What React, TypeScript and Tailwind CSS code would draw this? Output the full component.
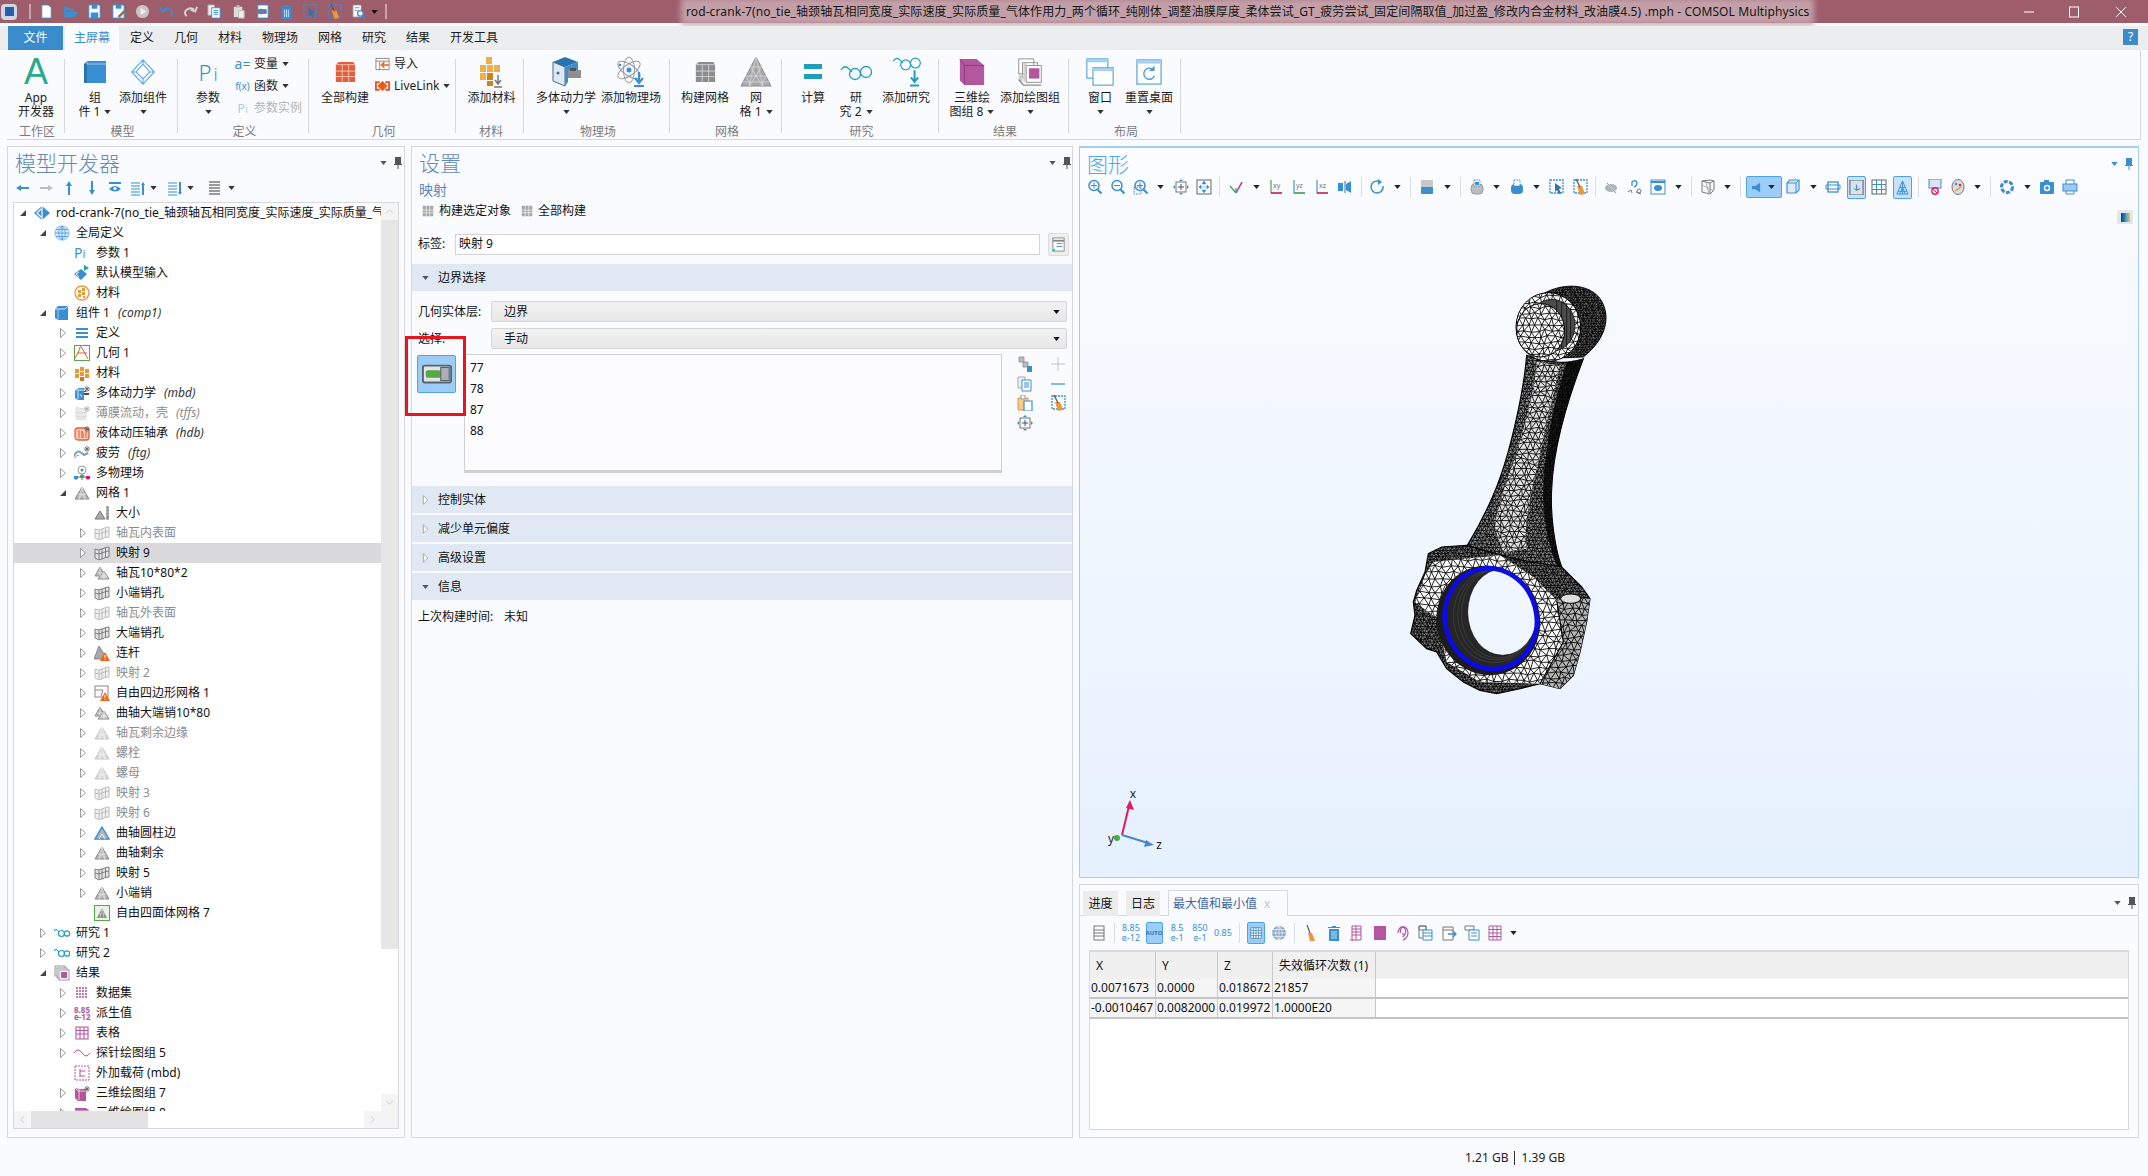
import React from "react"

const B = "#3a8fd3"
const LB = "#a3cff5"
const G = "#858585"
const M = "#b3559f"
const O = "#e8983a"
const R = "#e0603c"
const T = "#1f9dbb"

const warn = (
  <>
    <path d="M11 7l5 9H6z" fill="#f2641a" />
    <path d="M10.500 10h1v3h-1zM10.500 14h1v1h-1z" fill="#fff" />
  </>
)
const mapGrid = (
  <>
    <path d="M1 4q3 2 7 0t7-2v10q-4 0-7 2t-7-1z" fill="#e4e4e4" stroke="#7d7d7d" />
    <path d="M5 5v9M8 4v10M11.500 3v9M1 8q3 2 7 0t7-2" fill="none" stroke="#7d7d7d" />
  </>
)
const tri = (
  <>
    <path d="M8 2l7 12H1z" fill="#b5b5b5" stroke="#8a8a8a" />
    <path d="M8 2L5 14M8 2l3 12M4 9h8M5 14l3-5 3 5" fill="none" stroke="#e8e8e8" strokeWidth=".7" />
  </>
)
const triDouble = (
  <>
    <path d="M6 2l5 9H1z" fill="#b5b5b5" stroke="#8a8a8a" />
    <path d="M10 6l5 8H4z" fill="#cfcfcf" stroke="#8a8a8a" />
    <path d="M6 2v9M3 8h6M10 6v8M7 11h6" stroke="#eee" strokeWidth=".7" />
  </>
)
const glasses = (
  <>
    <path d="M0 6q2-3 4 0" fill="none" stroke={T} strokeWidth="1.200" />
    <circle cx="7.500" cy="8.500" r="3" fill="none" stroke={T} strokeWidth="1.200" />
    <circle cx="13" cy="8.500" r="2.700" fill="none" stroke={T} strokeWidth="1.200" />
    <path d="M4 6l1 1" stroke={T} />
  </>
)
const star = <path d="M13 1v6M10 4h6M11 2l4 4M15 2l-4 4" stroke="#666" strokeWidth=".9" />
const zoomBase = (
  <>
    <circle cx="7" cy="6.500" r="5" fill="none" stroke={B} strokeWidth="1.500" />
    <path d="M10.500 10.500l4 4" stroke={B} strokeWidth="2.200" />
  </>
)
const axis = (c: string, c2: string, t: string) => (
  <>
    <path d="M3 1v13h11" fill="none" stroke={c} strokeWidth="1.200" />
    <path d="M3 14h11" stroke={c2} strokeWidth="1.500" />
    <text x="5" y="9" fontSize="7" fill="#777">{t}</text>
  </>
)

// every small toolbar and tree glyph, drawn on a 16x16 grid
const P: Record<string, React.ReactNode> = {
  model: (
    <>
      <path d="M8 1l8 7-8 7-8-7z" fill={B} />
      <path d="M7 4L3 8l4 4M8 1v14" fill="none" stroke="#fff" strokeWidth="1.200" />
    </>
  ),
  globe: (
    <>
      <circle cx="8" cy="8" r="7" fill="#d8eafa" stroke={LB} strokeWidth="1.500" />
      <path d="M1 8h14M2 4.500h12M2 11.500h12M8 1v14M8 1q-7 7 0 14M8 1q7 7 0 14" fill="none" stroke={B} strokeWidth=".7" />
    </>
  ),
  input: (
    <>
      <path d="M7 4l6 5-6 6-7-6z" fill={B} />
      <path d="M5 7L2 9l3 3" fill="none" stroke="#fff" />
      <path d="M10 0l5 3-5 3z" fill="#1fa79a" />
    </>
  ),
  matCirc: (
    <>
      <circle cx="8" cy="8" r="7" fill="#fff" stroke={O} strokeWidth="1.300" />
      <path d="M4 5h3v3H4zM8 3h3v3H8zM4 9h3v3H4zM8 7h3v3H8zM9 11h2v2H9z" fill={O} />
    </>
  ),
  cube: (
    <>
      <path d="M1 4l3-3h10v14H4l-3-2z" fill={B} />
      <path d="M1 4h10l3-3" fill="none" stroke="#fff" strokeWidth=".8" />
      <path d="M4 4v11" stroke="#8ec2ec" strokeWidth="1.200" />
    </>
  ),
  defs: <path d="M2 3h12v2H2zM2 7h12v2H2zM2 11h12v2H2z" fill={B} />,
  geom: (
    <>
      <rect x=".500" y=".500" width="15" height="15" fill="#fff" stroke="#58a845" />
      <path d="M1 13Q5 8 6 2q1-1 2 1l6 11M3 8h10" fill="none" stroke={R} />
    </>
  ),
  matGrid: (
    <>
      <path d="M1 4h4v4H1zM6 2h4v4H6zM11 4h4v4h-4zM1 9h4v4H1zM6 7h4v4H6zM11 9h4v4h-4z" fill={O} />
      <path d="M6 12h4v4H6z" fill="#c97a1e" />
    </>
  ),
  mbd: (
    <>
      <path d="M1 5l4-2h5v12H4l-3-2z" fill={B} />
      <path d="M4 6v8M1 5h9M6 9l2 3" stroke="#fff" strokeWidth=".8" />
      <path d="M10 8h5v2h-5zM10 6h2v1h-2z" fill="#4b4b4b" />
      {star}
    </>
  ),
  tffs: (
    <>
      <path d="M2 2q5 3 10 1v11q-5 2-10 0z" fill="#d9d9d9" stroke="#bbb" />
      <path d="M2 7q5 3 10 0M2 11q5 3 10 0" fill="none" stroke="#aaa" />
      {star}
    </>
  ),
  hdb: (
    <>
      <rect x="1" y="3" width="14" height="12" rx="3" fill="#f6c8b8" stroke={R} strokeWidth="1.300" />
      <path d="M5 5v8M8 13V6q2 3 1 7M12 5v8" fill="none" stroke={R} />
      {star}
    </>
  ),
  ftg: (
    <>
      <path d="M0 11q3-6 6-4t4 3l4-2" fill="none" stroke="#7a9fc4" strokeWidth="2" />
      <path d="M0 13q3-3 5-3" fill="none" stroke="#7a9fc4" />
      {star}
    </>
  ),
  multi: (
    <>
      <circle cx="8" cy="5" r="4" fill="none" stroke="#9a9a9a" />
      <circle cx="8" cy="5" r="1.500" fill={B} />
      <path d="M2 15v-3h12v3M8 9v6" fill="none" stroke="#666" />
      <path d="M0 11h4v3H0z" fill={B} />
      <path d="M6 10h4v3H6z" fill="#4aa84a" />
      <path d="M12 11h4v3h-4z" fill="#d0187a" />
    </>
  ),
  meshTri: tri,
  size: (
    <>
      <path d="M1 14l5-8 5 8z" fill="#aaa" stroke="#777" />
      <path d="M12 1h3v14h-3zM12 4h2M12 7h2M12 10h2" fill="#888" stroke="#fff" strokeWidth=".5" />
    </>
  ),
  mapGrid,
  triDouble,
  triWarn: (
    <>
      <path d="M5 1l5 8-2 5H0z" fill="#a8a8a8" stroke="#888" />
      {warn}
    </>
  ),
  quadWarn: (
    <>
      <rect x="1" y="1" width="13" height="11" fill="#fff" stroke="#888" />
      <path d="M1 5h8l-2 6" fill="none" stroke="#888" />
      {warn}
    </>
  ),
  triBlue: (
    <>
      <path d="M8 2l7 12H1z" fill="#b5b5b5" stroke={B} strokeWidth="1.400" />
      <path d="M5 14l3-5 3 5" fill="none" stroke="#eee" />
    </>
  ),
  freeTet: (
    <>
      <rect x=".500" y=".500" width="15" height="15" fill="#e9f2e6" stroke="#58a845" />
      <path d="M8 3l5 10H3z" fill="#8c8c8c" />
      <path d="M8 3L6 13M8 3l2 10M5 9h6" stroke="#ddd" strokeWidth=".6" />
    </>
  ),
  study: glasses,
  results: (
    <>
      <rect x="1" y="1" width="10" height="10" fill="#f4f4f4" stroke="#999" />
      <rect x="3" y="3" width="10" height="10" fill="#f4f4f4" stroke="#999" />
      <rect x="5" y="5" width="10" height="10" fill="#fff" stroke="#999" />
      <rect x="7" y="7" width="6" height="6" fill={M} />
    </>
  ),
  dataset: (
    <path d="M2 2h2v2H2zM5 2h2v2H5zM8 2h2v2H8zM11 2h2v2h-2zM2 5h2v2H2zM5 5h2v2H5zM8 5h2v2H8zM11 5h2v2h-2zM2 8h2v2H2zM5 8h2v2H5zM8 8h2v2H8zM11 8h2v2h-2zM2 11h2v2H2zM5 11h2v2H5zM8 11h2v2H8zM11 11h2v2h-2z" fill={M} opacity=".8" />
  ),
  table: <path d="M2 2h12v12H2zM2 5.500h12M2 9h12M6 2v12M10 2v12" fill="none" stroke={M} strokeWidth="1.100" />,
  wave: <path d="M0 8q4-6 8 0t8 0" fill="none" stroke={M} />,
  load: (
    <>
      <rect x="1" y="1" width="14" height="14" fill="none" stroke={M} strokeDasharray="2 1" />
      <path d="M6 4v8M6 6h5M6 11h5" stroke={M} />
    </>
  ),
  plot: (
    <>
      <path d="M1 3l4 1h7v12H4l-3-3z" fill={M} />
      <path d="M5 4v11M1 3l3 3h8" fill="none" stroke="#fff" strokeWidth=".7" />
      {star}
    </>
  ),
  plot2: (
    <>
      <path d="M1 3h11l3 2v10H1z" fill={M} />
      <path d="M1 6h14M5 6v9" stroke="#fff" strokeWidth=".7" />
    </>
  ),
  back: <path d="M1 8l5-3v2h8v2H6v2z" fill={B} />,
  forward: <path d="M15 8l-5-3v2H2v2h8v2z" fill="#bdbdbd" />,
  up: <path d="M8 1l3 5H9v9H7V6H5z" fill={B} />,
  down: <path d="M8 15l3-5H9V1H7v9H5z" fill={B} />,
  eye: (
    <>
      <path d="M2 3h12" stroke={B} strokeWidth="2" />
      <path d="M2 9q6-6 12 0-6 5-12 0z" fill={B} />
      <circle cx="8" cy="8.500" r="1.500" fill="#fff" />
    </>
  ),
  listUp: (
    <>
      <path d="M1 3h9M1 6h9M1 9h9M1 12h9M1 15h9" stroke={B} />
      <path d="M13 2l2 3h-1v10h-2V5h-1z" fill={B} />
    </>
  ),
  listDown: (
    <>
      <path d="M1 3h9M1 6h9M1 9h9M1 12h9M1 15h9" stroke={B} />
      <path d="M13 15l2-3h-1V2h-2v10h-1z" fill={B} />
    </>
  ),
  listGray: <path d="M2 2h11M2 5h11M2 8h11M2 11h11M2 14h11" stroke="#7b7b7b" strokeWidth="1.400" />,
  doc: <path d="M3 1h7l3 3v11H3z" fill="#fff" stroke={B} />,
  open: <path d="M1 14V3h5l1 2h5v2H4zM4 8h12l-3 6H1z" fill={B} />,
  save: (
    <>
      <path d="M2 1h11l1 1v13H2z" fill="#fff" stroke={B} />
      <path d="M5 1h6v4H5zM4 9h8v6H4z" fill={B} />
    </>
  ),
  saveAs: (
    <>
      <path d="M2 1h11l1 1v13H2z" fill="#fff" stroke={B} />
      <path d="M5 1h6v4H5z" fill={B} />
      <path d="M7 13l7-7 2 2-7 7z" fill="#777" />
    </>
  ),
  run: (
    <>
      <circle cx="8" cy="8" r="7" fill="#c8c3c6" />
      <path d="M6 4l6 4-6 4z" fill="#eee" />
    </>
  ),
  undo: <path d="M4 6q4-3 8 0t0 7M1 3l2 5 5-2" fill="none" stroke={B} strokeWidth="1.600" />,
  redo: <path d="M12 6q-4-3-8 0t0 7M15 3l-2 5-5-2" fill="none" stroke="#d9d4d6" strokeWidth="2" />,
  copy: (
    <>
      <path d="M1 1h7v11H1z" fill="#eee" stroke="#aaa" />
      <path d="M5 4h9v11H5z" fill="#fff" stroke={B} />
      <path d="M7 7h5M7 9h5M7 11h5" stroke={B} />
    </>
  ),
  pasteGray: (
    <>
      <path d="M3 3h9v11H3z" fill="#ddd" />
      <path d="M6 1h3v3H6z" fill="#bbb" />
      <path d="M8 7h6v8H8z" fill="#eee" stroke="#bbb" />
    </>
  ),
  import: (
    <>
      <path d="M3 1h11v14H3V10h9V6H3z" fill="#fff" stroke={B} />
      <path d="M1 8h8m-3-3l3 3-3 3" fill="none" stroke={B} strokeWidth="1.600" />
    </>
  ),
  trash: (
    <>
      <path d="M3 4h10v12H3z" fill={B} />
      <path d="M2 2h12v1H2zM6 1h4v1H6z" fill={B} />
      <path d="M6 6v8M8 6v8M10 6v8" stroke="#fff" strokeWidth=".7" />
    </>
  ),
  selBox: (
    <>
      <rect x="1" y="1" width="13" height="13" fill="none" stroke={B} strokeWidth="1.300" strokeDasharray="2 1" />
      <path d="M6 4l7 5-3 1 2 4-2 1-2-4-2 2z" fill="#2d75b0" />
    </>
  ),
  broom: (
    <>
      <rect x="2" y="1" width="13" height="13" fill="none" stroke={B} strokeWidth="1.300" strokeDasharray="2 1" />
      <path d="M5 7h5l3 8-5 1z" fill={O} />
      <path d="M4 0l4 8" stroke="#555" strokeWidth="1.200" />
    </>
  ),
  broomSolo: (
    <>
      <path d="M5 8h4l3 8H7z" fill={O} />
      <path d="M4 0l3 8" stroke="#555" strokeWidth="1.200" />
    </>
  ),
  find: (
    <>
      <path d="M2 1h9v13H2z" fill="#fff" stroke="#888" />
      <path d="M4 4h5M4 7h3" stroke="#888" />
      <circle cx="10" cy="10" r="3" fill="#fff" stroke={B} strokeWidth="1.400" />
      <path d="M12 12l3 3" stroke={B} strokeWidth="2" />
    </>
  ),
  zoomIn: (
    <>
      {zoomBase}
      <path d="M4 6.500h6M7 3.500v6" stroke={B} />
    </>
  ),
  zoomOut: (
    <>
      {zoomBase}
      <path d="M4 6.500h6" stroke={B} />
    </>
  ),
  zoomBox: (
    <>
      <rect x="1" y="8" width="7" height="7" fill="none" stroke={B} strokeDasharray="1.500 1" />
      {zoomBase}
      <path d="M4 6.500h6M7 3.500v6" stroke={B} />
    </>
  ),
  fitSel: (
    <>
      <path d="M8 0l2 2H6zM8 16l2-2H6zM0 8l2-2v4zM16 8l-2-2v4z" fill={B} />
      <rect x="3" y="3" width="10" height="10" fill="none" stroke="#777" />
      <path d="M5 8h6M8 5v6" stroke="#555" />
    </>
  ),
  fitAll: (
    <>
      <rect x="1" y="1" width="14" height="14" fill="none" stroke="#666" />
      <path d="M8 2l2 3H6zM8 14l2-3H6zM3 8h10M3 8l2-2v4zM13 8l-2-2v4z" fill={B} stroke={B} strokeWidth=".5" />
    </>
  ),
  triad: (
    <>
      <path d="M8 14L14 3" stroke="#e6195a" strokeWidth="1.400" />
      <path d="M8 14L2 7" stroke="#4aa84a" strokeWidth="1.400" />
      <path d="M8 14V9" stroke={B} strokeWidth="1.400" />
    </>
  ),
  xy: axis("#4aa84a", "#e6195a", "xy"),
  yz: axis("#4f90d0", "#4aa84a", "yz"),
  xz: axis("#4f90d0", "#e6195a", "xz"),
  flip: (
    <>
      <path d="M1 4h5v8H1z" fill={B} />
      <path d="M9 5l5-3v12l-5-3z" fill={B} />
      <path d="M8 2v12" stroke="#2d75b0" />
    </>
  ),
  rotate: (
    <>
      <path d="M13 7a6 6 0 1 1-5-5" fill="none" stroke={B} strokeWidth="1.500" />
      <path d="M8 0l4 3-4 3z" fill={B} />
    </>
  ),
  light: (
    <>
      <rect x="2" y="1" width="12" height="14" rx="1" fill="#c8c8c8" />
      <rect x="2" y="8" width="12" height="7" rx="1" fill={B} />
    </>
  ),
  mouse1: (
    <>
      <rect x="2" y="5" width="12" height="10" rx="4" fill="#bdbdbd" stroke="#999" />
      <rect x="5" y="1" width="6" height="6" fill="#fff" stroke={B} strokeDasharray="1.500 1" />
      <rect x="6" y="3" width="4" height="3" fill={B} />
    </>
  ),
  mouse2: (
    <>
      <rect x="2" y="5" width="12" height="10" rx="4" fill={B} />
      <rect x="5" y="1" width="6" height="6" fill="#fff" stroke={B} strokeDasharray="1.500 1" />
    </>
  ),
  hide: (
    <>
      <ellipse cx="7" cy="9" rx="6" ry="4" fill="#aab4bd" />
      <path d="M3 4l9 10" stroke="#eee" strokeWidth="1.500" />
      <path d="M3 4l9 10" stroke="#8a95a0" />
    </>
  ),
  reset: (
    <>
      <path d="M5 7V3q4-3 5 1 0 3-3 4" fill="none" stroke={B} strokeWidth="1.300" />
      <path d="M1 13l3-2 1 3M9 13l5 2" stroke="#777" fill="none" />
      <circle cx="12" cy="12" r="2" fill="none" stroke="#777" />
    </>
  ),
  view: (
    <>
      <rect x="1" y="1" width="14" height="14" fill="#fff" stroke={B} />
      <path d="M1 3h14" stroke={B} strokeWidth="2" />
      <ellipse cx="8" cy="9" rx="4" ry="3" fill={B} />
    </>
  ),
  wire: (
    <>
      <path d="M2 2l8 2v11l-8-2zM10 4l4-2v9l-4 4M2 2l8-1 4 1" fill="none" stroke="#777" />
      <path d="M2 6l12 6M6 3l3 12" stroke="#aaa" />
    </>
  ),
  speaker: <path d="M0 6h4l6-4v12l-6-4H0z" fill={B} />,
  box3d: (
    <>
      <path d="M2 4l3-3h9v10l-3 3H2z" fill="#dcecfa" stroke={B} strokeWidth="1.200" />
      <path d="M2 4h9v10M11 4l3-3" fill="none" stroke={B} />
    </>
  ),
  frame: (
    <>
      <rect x="3" y="3" width="10" height="10" fill="none" stroke={B} strokeWidth="1.300" />
      <path d="M1 6h14v4H1z" fill="none" stroke={B} />
    </>
  ),
  triad2: (
    <>
      <rect x="1" y="0" width="14" height="16" fill="#d5e4f2" stroke="#555" />
      <path d="M8 11V5" stroke={B} strokeWidth="1.400" />
      <path d="M8 11l4-2" stroke="#e6195a" />
      <path d="M8 11L5 9" stroke="#4aa84a" />
    </>
  ),
  gridBox: (
    <>
      <rect x="1" y="1" width="14" height="14" fill="#fff" stroke="#666" />
      <path d="M5.500 1v14M10.500 1v14M1 5.500h14M1 10.500h14" stroke={B} />
    </>
  ),
  triLines: <path d="M8 1l6 14H2zM8 1v14M5 8h6M3.500 12h9M5 15l3-7 3 7" fill="none" stroke={B} />,
  noResult: (
    <>
      <rect x="2" y="0" width="12" height="9" fill="#d9e5f0" stroke={B} />
      <circle cx="8" cy="12" r="3.200" fill="none" stroke="#e6195a" strokeWidth="1.400" />
      <path d="M6 10l4 4" stroke="#e6195a" />
    </>
  ),
  palette: (
    <>
      <ellipse cx="8" cy="8" rx="6" ry="7.500" fill="#ddd" stroke="#777" />
      <circle cx="6" cy="5" r="1.300" fill={B} />
      <circle cx="10" cy="6" r="1.300" fill="#e6195a" />
      <path d="M5 12l6-4" stroke={O} strokeWidth="1.500" />
    </>
  ),
  aperture: <circle cx="8" cy="8" r="5.500" fill="none" stroke={B} strokeWidth="3" strokeDasharray="4 1.500" />,
  camera: (
    <>
      <rect x="1" y="3" width="14" height="12" rx="1" fill={B} />
      <path d="M5 1h5v3H5z" fill={B} />
      <circle cx="8" cy="9" r="3.200" fill="#fff" />
      <circle cx="8" cy="9" r="1.800" fill={B} />
    </>
  ),
  print: (
    <>
      <path d="M4 1h8v5H4zM4 11h8v4H4z" fill="#fff" stroke={B} />
      <rect x="1" y="5" width="14" height="7" fill="#9dc8ec" stroke={B} />
    </>
  ),
  pane: (
    <>
      <rect x="3" y="1" width="10" height="14" fill="#fff" stroke="#777" />
      <path d="M3 5h10M3 8h10M3 11h10" stroke="#777" strokeWidth="1.200" />
    </>
  ),
  gridBlue: <path d="M2 2h12v12H2zM2 5h12M2 8h12M2 11h12M5 2v12M8 2v12M11 2v12" fill="#fff" stroke="#2d75b0" strokeWidth=".8" />,
  globeG: (
    <>
      <circle cx="8" cy="8" r="7" fill="#8fa9c4" />
      <path d="M1 8h14M2 4.500h12M2 11.500h12M8 1v14M8 1q-7 7 0 14M8 1q7 7 0 14" fill="none" stroke="#fff" strokeWidth=".6" />
    </>
  ),
  tableCols: <path d="M3 1h9v14H3zM3 4h9M3 7h9M3 10h9M7 1v14M1 15h3" fill="none" stroke={M} />,
  solid: <rect x="2" y="1" width="12" height="14" fill={M} />,
  ear: <path d="M3 8a5 6.500 0 1 1 10 0q0 3-2 5t-3 2M5.500 8a2.700 4 0 1 1 5 0q-1 3-3 4M8 8v2" fill="none" stroke={M} strokeWidth="1.200" />,
  tableExp: (
    <>
      <path d="M1 1h7v4H1z" fill="#fff" stroke="#777" />
      <path d="M1 1h7v12H1z" fill="none" stroke="#777" />
      <path d="M5 5h9v10H5zM5 8h9M5 11h9" fill="#fff" stroke={B} />
    </>
  ),
  tableTo: (
    <>
      <path d="M2 2h10v13H2zM2 5h10" fill="#fff" stroke="#777" />
      <path d="M7 9h8m-3-3l3 3-3 3" fill="none" stroke={B} strokeWidth="1.300" />
    </>
  ),
  tableFrom: (
    <>
      <path d="M1 1h9v4H1z" fill="#fff" stroke="#777" />
      <path d="M5 5h10v10H5zM7 8h6M7 11h6" fill="#fff" stroke={B} />
    </>
  ),
  magGrid: <path d="M2 1h12v14H2zM2 4.500h12M2 8h12M2 11.500h12M6 1v14M10 1v14" fill="#fff" stroke={M} />,
  links: (
    <>
      <path d="M2 1h5v5H2zM6 6h5v5H6z" fill="#bbb" stroke="#999" />
      <path d="M10 10h5v6h-5z" fill={B} />
    </>
  ),
  plus: <path d="M8 1v14M1 8h14" stroke="#c4c4c4" />,
  minus: <path d="M1 8h14" stroke={B} strokeWidth="1.200" />,
  paste: (
    <>
      <path d="M1 3h10v12H1z" fill="#f7c98b" stroke={O} />
      <path d="M4 0h4v4H4z" fill="#fff" stroke="#999" />
      <path d="M7 6h8v10H7z" fill="#fff" stroke={B} strokeWidth="1.200" />
    </>
  ),
  focus: (
    <>
      <rect x="3" y="3" width="10" height="10" fill="none" stroke="#777" />
      <path d="M8 0l2 2H6zM8 16l2-2H6zM0 8l2-2v4zM16 8l-2-2v4z" fill={B} />
      <path d="M5 8h6M8 5v6" stroke="#555" />
    </>
  ),
  toggle: (
    <>
      <rect x=".500" y="3.500" width="15" height="9" rx="1" fill="#e2e6e9" stroke="#56626d" />
      <rect x="2" y="6" width="8" height="4" rx="1" fill="#58a845" />
      <rect x="10" y="4.500" width="4.500" height="7" fill="#aab0b5" stroke="#5a646e" strokeWidth=".6" />
    </>
  ),
  smallBuild: (
    <>
      <rect x="2" y="2" width="12" height="12" fill="#a8a8a8" />
      <path d="M2 7h12M2 10h12M6 2v12M10 2v12" stroke="#fff" strokeWidth=".7" />
    </>
  ),
  label: (
    <>
      <rect x="2" y="1" width="12" height="14" fill="#fff" stroke="#888" />
      <path d="M2 4h12" stroke="#888" strokeWidth="2" />
      <path d="M6 7h6M6 10h6" stroke="#1fa79a" />
      <path d="M1 15l3-3v3z" fill="#1fa79a" />
    </>
  ),
}

const Ic = ({ n, s = 16, className }: { n: string; s?: number; className?: string }) => (
  <svg viewBox="0 0 16 16" width={s} height={s} className={className}>
    {P[n]}
  </svg>
)

const Caret = ({ c = "#333" }: { c?: string }) => (
  <svg viewBox="0 0 8 5" width="7" height="4">
    <path d="M0 0h8L4 5z" fill={c} />
  </svg>
)

// the big ribbon pictures
const Big: Record<string, React.ReactNode> = {
  cube: (
    <svg viewBox="0 0 24 24" width="24" height="24">
      <path d="M1 4l3-3h19v22H4l-3-3z" fill={B} />
      <path d="M1 4h3v19H1z" fill="#2a74ad" />
      <path d="M4 1v3h19" fill="none" stroke="#9ccaef" />
    </svg>
  ),
  wire: (
    <svg viewBox="0 0 30 30" width="30" height="26">
      <path d="M15 1l13 14-13 14L2 15zM15 6l-8 9 8 8 8-8zM2 15h5M23 15h5M15 1v5M15 23v6" fill="#fff" stroke="#5eaae6" strokeWidth="1.300" />
    </svg>
  ),
  build: (
    <svg viewBox="0 0 24 24" width="22" height="24">
      <path d="M2 4l3-3h16l2 3v19H2z" fill={R} />
      <path d="M2 4h21M2 11h21M2 17h21M9 4v19M16 4v19" stroke="#f5cdbf" strokeWidth=".9" />
    </svg>
  ),
  material: (
    <svg viewBox="0 0 32 32" width="32" height="32">
      <path d="M10 1h6v7h-6zM4 9h6v7H4zM11 9h6v7h-6zM18 9h6v7h-6zM4 17h6v7H4z" fill="#f0ad4a" />
      <path d="M11 17h6v7h-6zM11 25h6v5h-6z" fill="#cb821f" />
      <path d="M22 19v8m-3-3l3 4 3-4M18 31h8" fill="none" stroke="#777" strokeWidth="1.500" />
    </svg>
  ),
  mbd: (
    <svg viewBox="0 0 32 32" width="32" height="32">
      <path d="M3 6l12-5 13 5-13 5z" fill="#2a74ad" />
      <path d="M3 6l12 5v19L3 25z" fill="#dfe9f2" stroke="#3b6e99" />
      <path d="M15 11l13-5v8H18v12l-3 4z" fill={B} />
      <path d="M18 14h13v8H18z" fill="#8f8f8f" />
      <path d="M20 12h6v3h-6z" fill="#555" />
      <circle cx="8" cy="17" r="1.500" fill="#3b6e99" />
    </svg>
  ),
  atom: (
    <svg viewBox="0 0 32 32" width="34" height="32">
      <g fill="none" stroke="#9c9c9c">
        <ellipse cx="14" cy="14" rx="13" ry="5.500" transform="rotate(35 14 14)" />
        <ellipse cx="14" cy="14" rx="13" ry="5.500" transform="rotate(-35 14 14)" />
        <ellipse cx="14" cy="14" rx="5.500" ry="13" />
      </g>
      <circle cx="14" cy="14" r="2.500" fill={B} />
      <circle cx="5" cy="9" r="1.300" fill={B} />
      <path d="M24 16v9m-4-3l4 5 4-5M19 30h10" fill="none" stroke={B} strokeWidth="2.200" />
    </svg>
  ),
  buildGray: (
    <svg viewBox="0 0 24 24" width="22" height="24">
      <path d="M2 4l3-3h16l2 3v19H2z" fill="#8d8d8d" />
      <path d="M2 4h21M2 11h21M2 17h21M9 4v19M16 4v19" stroke="#d8d8d8" strokeWidth=".9" />
    </svg>
  ),
  meshTri: (
    <svg viewBox="0 0 32 32" width="32" height="32">
      <path d="M16 1l15 29H1z" fill="#a9a9a9" stroke="#8c8c8c" />
      <path d="M16 1L9 30M16 1l7 29M6 20h20M11 11h10M3 26h26M9 30l7-10 7 10M6 20l5 10M26 20l-5 10M11 11l5 9 5-9" fill="none" stroke="#ddd" strokeWidth=".7" />
    </svg>
  ),
  equal: (
    <svg viewBox="0 0 20 20" width="20" height="20">
      <path d="M1 2h18v5H1zM1 12h18v5H1z" fill={T} />
    </svg>
  ),
  glasses: (
    <svg viewBox="0 0 32 18" width="32" height="18">
      <path d="M1 7q4-6 8-1l3 3" fill="none" stroke={T} strokeWidth="1.300" />
      <circle cx="15" cy="11" r="5.500" fill="none" stroke={T} strokeWidth="1.300" />
      <circle cx="26" cy="9" r="5.500" fill="none" stroke={T} strokeWidth="1.300" />
    </svg>
  ),
  studyAdd: (
    <svg viewBox="0 0 32 38" width="29" height="34">
      <path d="M1 7q4-6 8-1l3 3" fill="none" stroke={T} strokeWidth="1.300" />
      <circle cx="15" cy="11" r="5.500" fill="none" stroke={T} strokeWidth="1.300" />
      <circle cx="26" cy="9" r="5.500" fill="none" stroke={T} strokeWidth="1.300" />
      <path d="M25 17v12m-4-4l4 5 4-5M20 34h10" fill="none" stroke={T} strokeWidth="2.200" />
    </svg>
  ),
  plot: (
    <svg viewBox="0 0 30 30" width="28" height="28">
      <path d="M2 1h18l8 7v21H7l-5-5z" fill={M} />
      <path d="M2 1l5 7h21M7 8v21" fill="none" stroke="#8c3d7a" />
    </svg>
  ),
  plotAdd: (
    <svg viewBox="0 0 32 32" width="30" height="30">
      <path d="M4 2h16v16H4zM8 6h16v16H8z" fill="#fff" stroke="#8f8f8f" />
      <rect x="12" y="9" width="16" height="18" fill="#fff" stroke="#8f8f8f" />
      <rect x="15" y="12" width="11" height="11" fill={M} />
      <path d="M9 6h3v20h-3zM4 18h4v8H4z" fill="#cfcfcf" />
      <path d="M4 24l5 6h19" fill="none" stroke="#8f8f8f" strokeWidth="1.500" />
    </svg>
  ),
  windows: (
    <svg viewBox="0 0 32 32" width="30" height="28">
      <rect x="1" y="1" width="24" height="22" fill="#fff" stroke="#4b9ad8" strokeWidth="1.200" />
      <path d="M1 1h24v4H1z" fill="#a6cff0" />
      <rect x="8" y="11" width="23" height="20" fill="#fff" stroke="#4b9ad8" strokeWidth="1.200" />
      <path d="M8 11h23v4H8z" fill="#a6cff0" />
    </svg>
  ),
  resetWin: (
    <svg viewBox="0 0 28 28" width="26" height="28">
      <rect x="1" y="1" width="26" height="26" fill="#fff" stroke="#4b9ad8" strokeWidth="1.200" />
      <path d="M1 1h26v4H1z" fill="#a6cff0" />
      <path d="M19 12a6 6 0 1 0 1 6" fill="none" stroke="#4b9ad8" strokeWidth="1.500" />
      <path d="M20 7v6h-6" fill="#4b9ad8" />
    </svg>
  ),
}

const ns = "[font-family:'Noto_Sans','Noto_Sans_CJK_SC',sans-serif]"

const RibbonBtn = ({ w, pic, lines, caret, tail }: { w: string; pic: React.ReactNode; lines: string[]; caret?: boolean; tail?: boolean }) => (
  <div className={`${w} flex shrink-0 flex-col items-center`}>
    <div className="flex h-[38px] items-center justify-center">{pic}</div>
    {lines.map((l, i) => (
      <div key={i} className="flex h-[14px] items-center gap-1 whitespace-nowrap text-xs leading-[14px]">
        {l}
        {tail && i === lines.length - 1 && <Caret />}
      </div>
    ))}
    {caret && (
      <div className="flex h-[14px] items-center">
        <Caret />
      </div>
    )}
  </div>
)

const Group = ({ w, title, children }: { w: string; title: string; children: React.ReactNode }) => (
  <div className={`${w} flex shrink-0`}>
    <div className="flex min-w-0 flex-1 flex-col">
      <div className="flex h-[75px] items-start pt-[3px]">{children}</div>
      <div className="pl-[3px] text-center text-xs leading-[14px] text-[#7c7c7c]">{title}</div>
    </div>
    <div className="mt-[9px] h-[74px] w-px bg-[#d5d8de]" />
  </div>
)

const SmallBtn = ({ pic, label, gray, caret }: { pic: React.ReactNode; label: string; gray?: boolean; caret?: boolean }) => (
  <div className="flex h-[22px] items-center gap-1 whitespace-nowrap text-xs">
    <span className="flex w-[15px] justify-center">{pic}</span>
    <span className={gray ? "text-[#b5b5b5]" : ""}>{label}</span>
    {caret && <Caret />}
  </div>
)

const Ribbon = () => (
  <div className="mx-[7px] flex h-[90px] border-r border-b border-[#d5d8de] bg-[#fafbff] text-[#1c1c1c]">
    <Group w="w-[58px]" title="工作区">
      <RibbonBtn
        w="w-[58px]"
        pic={<span className="text-[36px] leading-none font-light text-[#27ab8b] [font-family:'Liberation_Sans']">A</span>}
        lines={["App", "开发器"]}
      />
    </Group>
    <Group w="w-[113px]" title="模型">
      <span className="w-[4px] shrink-0" />
      <RibbonBtn w="w-[52px]" pic={Big.cube} lines={["组", "件 1"]} tail />
      <RibbonBtn w="w-[44px]" pic={Big.wire} lines={["添加组件"]} caret />
    </Group>
    <Group w="w-[131px]" title="定义">
      <span className="w-[3px] shrink-0" />
      <RibbonBtn
        w="w-[54px]"
        pic={<span className="text-[22px] leading-none font-light text-[#3a8fd3]">P<span className="ml-[2px] text-[18px]">i</span></span>}
        lines={["参数"]}
        caret
      />
      <div className="flex flex-col">
        <SmallBtn pic={<span className="text-sm leading-none text-[#3a8fd3]">a=</span>} label="变量" caret />
        <SmallBtn pic={<span className="text-[10px] leading-none text-[#3a8fd3]">f(x)</span>} label="函数" caret />
        <SmallBtn pic={<span className="text-[13px] leading-none text-[#a9cfee]">P<span className="text-[10px]">i</span></span>} label="参数实例" gray />
      </div>
    </Group>
    <Group w="w-[147px]" title="几何">
      <span className="w-[2px] shrink-0" />
      <RibbonBtn w="w-[68px]" pic={Big.build} lines={["全部构建"]} />
      <div className="-ml-[4px] flex flex-col">
        <SmallBtn
          pic={
            <svg viewBox="0 0 16 16" width="16" height="16">
              <path d="M1 2h14v12H1zM1 5h14M5 5v9" fill="#fff" stroke="#888" />
              <path d="M15 9H7m3-3L7 9l3 3" fill="none" stroke="#e8681e" strokeWidth="1.700" />
            </svg>
          }
          label="导入"
        />
        <SmallBtn
          pic={
            <svg viewBox="0 0 16 16" width="16" height="16">
              <path d="M5 4H1v8h4M11 4h4v8h-4M4 8l3-3v6zM12 8L9 5v6z" fill="none" stroke="#e8571e" strokeWidth="2" />
            </svg>
          }
          label="LiveLink"
          caret
        />
      </div>
    </Group>
    <Group w="w-[68px]" title="材料">
      <RibbonBtn w="w-[71px]" pic={Big.material} lines={["添加材料"]} />
    </Group>
    <Group w="w-[146px]" title="物理场">
      <RibbonBtn w="w-[84px]" pic={Big.mbd} lines={["多体动力学"]} caret />
      <RibbonBtn w="w-[46px]" pic={Big.atom} lines={["添加物理场"]} />
    </Group>
    <Group w="w-[112px]" title="网格">
      <RibbonBtn w="w-[70px]" pic={Big.buildGray} lines={["构建网格"]} />
      <RibbonBtn w="w-[32px]" pic={Big.meshTri} lines={["网", "格 1"]} tail />
    </Group>
    <Group w="w-[157px]" title="研究">
      <RibbonBtn w="w-[62px]" pic={Big.equal} lines={["计算"]} />
      <RibbonBtn w="w-[24px]" pic={Big.glasses} lines={["研", "究 2"]} tail />
      <RibbonBtn w="w-[76px]" pic={Big.studyAdd} lines={["添加研究"]} />
    </Group>
    <Group w="w-[130px]" title="结果">
      <RibbonBtn w="w-[66px]" pic={Big.plot} lines={["三维绘", "图组 8"]} tail />
      <RibbonBtn w="w-[50px]" pic={Big.plotAdd} lines={["添加绘图组"]} caret />
    </Group>
    <Group w="w-[112px]" title="布局">
      <RibbonBtn w="w-[62px]" pic={Big.windows} lines={["窗口"]} caret />
      <RibbonBtn w="w-[36px]" pic={Big.resetWin} lines={["重置桌面"]} caret />
    </Group>
  </div>
)

const TitleBar = () => (
  <div className="flex h-[23px] items-center bg-[#9e5d6b]">
    <div className="flex w-[686px] items-center">
      <div className="ml-[1px] flex h-[16px] w-[16px] items-center justify-center rounded-sm bg-[#cfd6e2]">
        <div className="h-[9px] w-[9px] bg-[#2a5cb0]" />
      </div>
      <div className="ml-[12px] h-[15px] w-[2px] bg-[#c9a5ad]" />
      <div className="ml-[3px] flex items-center">
        {["doc", "open", "save", "saveAs", "run", "undo", "redo", "copy", "pasteGray", "import", "trash", "selBox", "broom", "find"].map((n, i) => (
          <span key={i} className="flex w-[24px] justify-center">
            <Ic n={n} s={15} />
          </span>
        ))}
      </div>
      <span className="ml-[1px]">
        <Caret c="#111" />
      </span>
      <div className="ml-[7px] h-[15px] w-[2px] bg-[#c9a5ad]" />
    </div>
    <div className="bg-[#c3a0a8] text-xs leading-[17px] tracking-[0.1px] whitespace-nowrap text-[#161616] shadow-[0_0_6px_5px_#c3a0a8]">
      rod-crank-7(no_tie_轴颈轴瓦相同宽度_实际速度_实际质量_气体作用力_两个循环_纯刚体_调整油膜厚度_柔体尝试_GT_疲劳尝试_固定间隔取值_加过盈_修改内合金材料_改油膜4.5) .mph - COMSOL Multiphysics
    </div>
    <div className="ml-auto flex items-center pr-[21px] text-white">
      <svg viewBox="0 0 12 12" width="12" height="12" className="mr-[33px]">
        <path d="M1 6h10" stroke="#fff" />
      </svg>
      <svg viewBox="0 0 12 12" width="12" height="12" className="mr-[35px]">
        <rect x="1.500" y="1" width="9" height="10" fill="none" stroke="#fff" />
      </svg>
      <svg viewBox="0 0 12 12" width="12" height="12">
        <path d="M1 1l10 10M11 1L1 11" stroke="#fff" />
      </svg>
    </div>
  </div>
)

const Tabs = () => (
  <div className="mt-[3px] flex h-[24px] items-stretch bg-[#ecedef] pr-[10px] pl-[8px] text-xs text-[#1c1c1c]">
    <div className="flex w-[55px] items-center justify-center bg-[#3a8bcb] text-white">文件</div>
    <div className="mx-[2px] flex w-[54px] items-center justify-center bg-[#fafbff] text-[#3a8bcb]">主屏幕</div>
    <div className="ml-[9px] flex items-center gap-[20px]">
      {["定义", "几何", "材料", "物理场", "网格", "研究", "结果", "开发工具"].map(t => (
        <span key={t}>{t}</span>
      ))}
    </div>
    <div className="mt-[3px] ml-auto flex h-[16px] w-[15px] items-center justify-center bg-[#3a8bcb] text-xs text-white">?</div>
  </div>
)

type Row = { l: number; t: string; i?: string; ic?: string; x?: "open" | "closed"; f?: boolean; sel?: boolean }

const rows: Row[] = [
  { l: 0, t: "rod-crank-7(no_tie_轴颈轴瓦相同宽度_实际速度_实际质量_气体作用力_两个循环", ic: "model", x: "open" },
  { l: 1, t: "全局定义", ic: "globe", x: "open" },
  { l: 2, t: "参数 1", ic: "pi" },
  { l: 2, t: "默认模型输入", ic: "input" },
  { l: 2, t: "材料", ic: "matCirc" },
  { l: 1, t: "组件 1", i: "(comp1)", ic: "cube", x: "open" },
  { l: 2, t: "定义", ic: "defs", x: "closed" },
  { l: 2, t: "几何 1", ic: "geom", x: "closed" },
  { l: 2, t: "材料", ic: "matGrid", x: "closed" },
  { l: 2, t: "多体动力学", i: "(mbd)", ic: "mbd", x: "closed" },
  { l: 2, t: "薄膜流动，壳", i: "(tffs)", ic: "tffs", x: "closed", f: true },
  { l: 2, t: "液体动压轴承", i: "(hdb)", ic: "hdb", x: "closed" },
  { l: 2, t: "疲劳", i: "(ftg)", ic: "ftg", x: "closed" },
  { l: 2, t: "多物理场", ic: "multi", x: "closed" },
  { l: 2, t: "网格 1", ic: "meshTri", x: "open" },
  { l: 3, t: "大小", ic: "size" },
  { l: 3, t: "轴瓦内表面", ic: "mapGrid", x: "closed", f: true },
  { l: 3, t: "映射 9", ic: "mapGrid", x: "closed", sel: true },
  { l: 3, t: "轴瓦10*80*2", ic: "triDouble", x: "closed" },
  { l: 3, t: "小端销孔", ic: "mapGrid", x: "closed" },
  { l: 3, t: "轴瓦外表面", ic: "mapGrid", x: "closed", f: true },
  { l: 3, t: "大端销孔", ic: "mapGrid", x: "closed" },
  { l: 3, t: "连杆", ic: "triWarn", x: "closed" },
  { l: 3, t: "映射 2", ic: "mapGrid", x: "closed", f: true },
  { l: 3, t: "自由四边形网格 1", ic: "quadWarn", x: "closed" },
  { l: 3, t: "曲轴大端销10*80", ic: "triDouble", x: "closed" },
  { l: 3, t: "轴瓦剩余边缘", ic: "meshTri", x: "closed", f: true },
  { l: 3, t: "螺栓", ic: "meshTri", x: "closed", f: true },
  { l: 3, t: "螺母", ic: "meshTri", x: "closed", f: true },
  { l: 3, t: "映射 3", ic: "mapGrid", x: "closed", f: true },
  { l: 3, t: "映射 6", ic: "mapGrid", x: "closed", f: true },
  { l: 3, t: "曲轴圆柱边", ic: "triBlue", x: "closed" },
  { l: 3, t: "曲轴剩余", ic: "meshTri", x: "closed" },
  { l: 3, t: "映射 5", ic: "mapGrid", x: "closed" },
  { l: 3, t: "小端销", ic: "meshTri", x: "closed" },
  { l: 3, t: "自由四面体网格 7", ic: "freeTet" },
  { l: 1, t: "研究 1", ic: "study", x: "closed" },
  { l: 1, t: "研究 2", ic: "study", x: "closed" },
  { l: 1, t: "结果", ic: "results", x: "open" },
  { l: 2, t: "数据集", ic: "dataset", x: "closed" },
  { l: 2, t: "派生值", ic: "derived", x: "closed" },
  { l: 2, t: "表格", ic: "table", x: "closed" },
  { l: 2, t: "探针绘图组 5", ic: "wave", x: "closed" },
  { l: 2, t: "外加载荷 (mbd)", ic: "load" },
  { l: 2, t: "三维绘图组 7", ic: "plot", x: "closed" },
  { l: 2, t: "三维绘图组 8", ic: "plot2", x: "closed" },
]

const indent = ["pl-[3px]", "pl-[23px]", "pl-[43px]", "pl-[63px]"]

const Expander = ({ x }: { x?: "open" | "closed" }) => (
  <span className="flex w-3 shrink-0 justify-center">
    {x === "open" && (
      <svg viewBox="0 0 12 12" width="12" height="12">
        <path d="M9 3v6H3z" fill="#444" />
      </svg>
    )}
    {x === "closed" && (
      <svg viewBox="0 0 12 12" width="12" height="12">
        <path d="M3.500 1.500l5 4.500-5 4.500z" fill="#fff" stroke="#9a9a9a" />
      </svg>
    )}
  </span>
)

const TreeIcon = ({ n }: { n?: string }) => {
  if (n === "pi") return <span className="w-4 text-sm leading-none text-[#3a8fd3]">P<span className="text-[11px]">i</span></span>
  if (n === "derived")
    return (
      <span className="flex w-4 flex-col text-[8px] leading-[7px] font-bold text-[#b3559f]">
        <span>8.85</span>
        <span>e-12</span>
      </span>
    )
  return <Ic n={n || "doc"} />
}

const PinMenu = ({ c = "#555" }: { c?: string }) => (
  <span className="flex items-center gap-[7px]">
    <Caret c={c} />
    <svg viewBox="0 0 8 12" width="8" height="12">
      <path d="M1 0h6v7H1zM0 7h8v1H0zM3.500 8h1v4h-1z" fill={c} />
    </svg>
  </span>
)

const PanelHead = ({ title, color, pin }: { title: string; color: string; pin?: string }) => (
  <div className="flex h-[32px] shrink-0 items-center justify-between">
    <span className={`text-[21px] leading-none font-light ${color}`}>{title}</span>
    <PinMenu c={pin} />
  </div>
)

const Tree = () => (
  <div className="flex w-[398px] shrink-0 flex-col border border-[#d5d8de] px-[5px] pb-[8px]">
    <div className="-mr-[3px] pl-[2px]">
      <PanelHead title="模型开发器" color="text-[#6289b8]" />
    </div>
    <div className="-mt-[1px] -ml-[2px] flex h-[20px] shrink-0 items-center">
      {["back", "forward", "up", "down", "eye", "listUp"].map(n => (
        <span key={n} className="flex w-[23px] justify-center">
          <Ic n={n} />
        </span>
      ))}
      <span className="ml-[1px] w-[17px]"><Caret /></span>
      <Ic n="listDown" />
      <span className="ml-[4px] w-[20px]"><Caret /></span>
      <Ic n="listGray" />
      <span className="ml-[5px]"><Caret /></span>
    </div>
    <div className="mt-[4px] flex min-h-0 flex-1 flex-col border border-[#d5d8de] bg-white">
      <div className="flex min-h-0 flex-1">
        <div className="min-w-0 flex-1 overflow-hidden text-xs text-[#111]">
          {rows.map((r, i) => (
            <div key={i} className={`flex h-5 items-center whitespace-nowrap ${indent[r.l]} ${r.sel ? "bg-[#dadadc]" : ""}`}>
              <Expander x={r.x} />
              <span className={`ml-[5px] flex w-4 shrink-0 justify-center ${r.f ? "opacity-50" : ""}`}>
                <TreeIcon n={r.ic} />
              </span>
              <span className={`ml-[6px] ${r.f ? "text-[#8c8c8c]" : ""}`}>{r.t}</span>
              {r.i && <span className={`ml-[8px] italic ${r.f ? "text-[#8c8c8c]" : "text-[#333]"}`}>{r.i}</span>}
            </div>
          ))}
        </div>
        <div className="flex w-[17px] shrink-0 flex-col bg-white">
          <div className="flex h-[17px] items-center justify-center bg-[#f4f4f4] text-[#ccc]">
            <svg viewBox="0 0 10 6" width="9" height="5"><path d="M1 5l4-4 4 4" fill="none" stroke="#c8c8c8" /></svg>
          </div>
          <div className="h-[729px] bg-[#e6e6e6]" />
          <div className="flex-1" />
          <div className="flex h-[17px] items-center justify-center bg-[#f4f4f4]">
            <svg viewBox="0 0 10 6" width="9" height="5"><path d="M1 1l4 4 4-4" fill="none" stroke="#c8c8c8" /></svg>
          </div>
        </div>
      </div>
      <div className="flex h-[17px] shrink-0 bg-[#f4f4f4]">
        <div className="flex w-[17px] items-center justify-center">
          <svg viewBox="0 0 6 10" width="5" height="9"><path d="M5 1L1 5l4 4" fill="none" stroke="#c8c8c8" /></svg>
        </div>
        <div className="w-[117px] bg-[#e3e3e3]" />
        <div className="flex-1 bg-white" />
        <div className="flex w-[17px] items-center justify-center">
          <svg viewBox="0 0 6 10" width="5" height="9"><path d="M1 1l4 4-4 4" fill="none" stroke="#c8c8c8" /></svg>
        </div>
        <div className="w-[17px]" />
      </div>
    </div>
  </div>
)

const Section = ({ t, open }: { t: string; open?: boolean }) => (
  <div className="flex h-[27px] shrink-0 items-center bg-[#dfe8f3] text-xs text-[#111]">
    <span className="flex w-[26px] justify-center">
      {open ? (
        <Caret c="#555" />
      ) : (
        <svg viewBox="0 0 8 12" width="7" height="12">
          <path d="M1.500 1l5 5-5 5z" fill="#fff" stroke="#a0a0a0" />
        </svg>
      )}
    </span>
    {t}
  </div>
)

const Select = ({ label, value }: { label: string; value: string }) => (
  <div className="flex h-[21px] shrink-0 items-center pr-[5px] pl-[6px] text-xs text-[#111]">
    <span className="w-[73px] shrink-0 whitespace-nowrap">{label}</span>
    <div className="flex h-full flex-1 items-center justify-between rounded-[2px] border border-[#d6d6d6] bg-gradient-to-b from-[#f2f2f2] to-[#e7e7e7] pr-[6px] pl-[12px]">
      {value}
      <Caret c="#111" />
    </div>
  </div>
)

const Settings = () => (
  <div className="relative ml-[6px] flex w-[662px] shrink-0 flex-col border border-[#d5d8de]">
    <div className="pr-[1px] pl-[7px]">
      <PanelHead title="设置" color="text-[#6289b8]" />
    </div>
    <div className="mt-[1px] pl-[7px] text-sm leading-[20px] text-[#5c87bd]">映射</div>
    <div className="flex h-[22px] items-center pl-[9px] text-xs text-[#111]">
      <Ic n="smallBuild" s={14} />
      <span className="ml-[4px]">构建选定对象</span>
      <span className="ml-[9px]"><Ic n="smallBuild" s={14} /></span>
      <span className="ml-[4px]">全部构建</span>
    </div>
    <div className="mt-[11px] flex h-[22px] items-center pl-[6px] text-xs text-[#111]">
      <span className="w-[37px]">标签:</span>
      <div className="flex h-[21px] w-[585px] items-center border border-[#d4d4d4] bg-white pl-[3px]">映射 9</div>
      <div className="ml-[8px] flex h-[23px] w-[21px] items-center justify-center rounded-[2px] border border-[#dcdcdc] bg-[#eee]">
        <Ic n="label" s={15} />
      </div>
    </div>
    <div className="mt-[9px]"><Section t="边界选择" open /></div>
    <div className="mt-[10px]"><Select label="几何实体层:" value="边界" /></div>
    <div className="mt-[6px]"><Select label="选择:" value="手动" /></div>
    <div className="mt-[5px] flex h-[119px] shrink-0 pl-[5px] text-xs text-[#111]">
      <div className="mt-[1px] flex h-[38px] w-[39px] items-center justify-center rounded-[2px] border border-[#4da3e8] bg-[#9ccdf7]">
        <Ic n="toggle" s={30} />
      </div>
      <div className="ml-[8px] flex w-[538px] flex-col gap-0 border border-b-[3px] border-[#d0d0d0] bg-[#fcfcff] pt-[2px] pl-[5px]">
        {[77, 78, 87, 88].map(n => (
          <div key={n} className="flex h-[21px] items-center">{n}</div>
        ))}
      </div>
      <div className="ml-[15px] grid h-[80px] grid-cols-[33px_16px] grid-rows-4 pt-[2px]">
        <Ic n="links" />
        <Ic n="plus" />
        <Ic n="copy" />
        <Ic n="minus" />
        <Ic n="paste" />
        <Ic n="broom" />
        <Ic n="focus" />
      </div>
    </div>
    <div className="mt-[13px] flex flex-col gap-[2px]">
      <Section t="控制实体" />
      <Section t="减少单元偏度" />
      <Section t="高级设置" />
      <Section t="信息" open />
    </div>
    <div className="mt-[7px] flex h-[20px] items-center pl-[6px] text-xs text-[#111]">
      <span className="w-[86px]">上次构建时间:</span>未知
    </div>
    <div className="pointer-events-none absolute top-[189px] left-[-7px] h-[80px] w-[61px] border-[3px] border-[#e8141e]" />
  </div>
)

type Tok = string
const gfxTools: Tok[] = [
  "zoomIn", "zoomOut", "zoomBox", "^", "fitSel", "fitAll", "|", "triad", "^", "xy", "yz", "xz", "flip", "|", "rotate", "^", "|", "light", "^", "|",
  "mouse1", "^", "mouse2", "^", "selBox", "broom", "|", "hide", "reset", "view", "^", "|", "wire", "^", "|", "#speaker", "box3d", "^", "frame", "@triad2", "gridBox", "@triLines", "|",
  "noResult", "palette", "^", "|", "aperture", "^", "camera", "print",
]

const Sep = () => <span className="mx-[4.250px] h-[20px] w-px shrink-0 bg-[#dadde2]" />

const ToolRow = ({ items }: { items: Tok[] }) => (
  <div className="flex h-[20px] items-center">
    {items.map((t, i) => {
      if (t === "^") return <span key={i} className="flex w-[17px] justify-center"><Caret c="#222" /></span>
      if (t === "|") return <Sep key={i} />
      if (t[0] === "#")
        return (
          <span key={i} className="flex h-[22px] w-[36px] shrink-0 items-center justify-center gap-[3px] rounded-[2px] border border-[#4da3e8] bg-[#9ccdf7]">
            <Ic n={t.slice(1)} s={13} />
            <Caret c="#222" />
          </span>
        )
      if (t[0] === "@")
        return (
          <span key={i} className="flex w-[23px] justify-center">
            <span className="flex h-[23px] w-[19px] items-center justify-center rounded-[2px] border border-[#4da3e8] bg-[#c8e2fa]">
              <Ic n={t.slice(1)} s={15} />
            </span>
          </span>
        )
      return (
        <span key={i} className="flex w-[23px] shrink-0 justify-center">
          <Ic n={t} />
        </span>
      )
    })}
  </div>
)

// jittered triangle grid, stands in for the solver mesh
const rnd = (i: number, j: number, s: number) => {
  const v = Math.sin(i * 12.9898 + j * 78.233 + s) * 43758.5453
  return v - Math.floor(v)
}
const mesh = (x0: number, y0: number, x1: number, y1: number, step: number) => {
  const h = step * 0.866
  const nx = Math.ceil((x1 - x0) / step) + 2
  const ny = Math.ceil((y1 - y0) / h) + 2
  const pt = (i: number, j: number) => {
    const x = x0 + (i + (j % 2) * 0.5) * step + (rnd(i, j, 1) - 0.5) * step * 0.45
    const y = y0 + j * h + (rnd(i, j, 2) - 0.5) * step * 0.45
    return `${x.toFixed(1)} ${y.toFixed(1)}`
  }
  let d = ""
  for (let j = 0; j < ny; j++) {
    for (let i = 0; i < nx; i++) {
      const a = pt(i, j)
      d += `M${a}L${pt(i + 1, j)}M${a}L${pt(i + (j % 2), j + 1)}M${a}L${pt(i + (j % 2) - 1, j + 1)}`
    }
  }
  return d
}

const shapes = {
  back: "M470 110C520 65 620 55 660 110C695 160 680 230 610 285L480 290Z",
  shank: "M440 280C435 340 425 410 395 530C370 630 340 720 262 850L400 900L545 915C525 860 510 760 515 680C520 560 560 420 610 290C570 310 490 300 440 280Z",
  band: "M470 300C465 380 440 470 410 570C385 650 350 730 345 800L370 870L440 860C430 790 450 700 475 600C495 500 520 400 540 310Z",
  dark: "M560 300C530 400 495 540 490 680C488 780 510 860 530 910L545 915C525 860 510 760 515 680C520 560 560 420 610 290Z",
  big: "M260 850L185 855L145 875L135 930L110 985L100 1020L105 1060L92 1115L140 1160L170 1170L200 1220L250 1260L300 1285L350 1295L420 1280L480 1265L540 1280L580 1240L600 1170L620 1080L630 1010L605 975L545 915L400 890Z",
  face: "M160 900L360 880L460 945L530 1015L550 1140L480 1265L300 1260L200 1200L172 1070L105 1020L135 940Z",
  side: "M530 1015L630 1010L620 1080L600 1170L580 1240L540 1280L480 1265L550 1140Z",
}

const Rod = () => (
  <svg viewBox="0 0 840 1320" width="280" height="440" className="absolute top-[114px] left-[300px]">
    <defs>
      {Object.entries(shapes).map(([k, d]) => (
        <clipPath id={`c-${k}`} key={k}>
          <path d={d} />
        </clipPath>
      ))}
      <clipPath id="c-ring"><ellipse cx="505" cy="195" rx="97" ry="103" /></clipPath>
      <clipPath id="c-pin"><ellipse cx="482" cy="205" rx="72" ry="80" /></clipPath>
      <clipPath id="c-hole"><ellipse cx="332" cy="1070" rx="137" ry="152" transform="rotate(-15 332 1070)" /></clipPath>
    </defs>
    <g fill="none" stroke="#000" strokeWidth="2.600">
      <path d={shapes.back} fill="#777" />
      <path d={mesh(460, 60, 690, 295, 9)} clipPath="url(#c-back)" />
      <path d={shapes.shank} fill="#8f8f8f" strokeWidth="3.500" />
      <path d={mesh(255, 275, 615, 920, 12)} clipPath="url(#c-shank)" />
      <path d={shapes.band} fill="#e0e0e0" stroke="none" />
      <path d={mesh(340, 295, 545, 875, 18)} clipPath="url(#c-band)" />
      <path d={shapes.dark} fill="#222" stroke="none" />
      <path d={mesh(485, 285, 615, 920, 10)} clipPath="url(#c-dark)" />
      <path d={shapes.big} fill="#808080" strokeWidth="3.500" />
      <path d={mesh(90, 845, 635, 1300, 11)} clipPath="url(#c-big)" />
      <path d={shapes.face} fill="#fff" stroke="none" />
      <path d={mesh(100, 875, 555, 1270, 22)} clipPath="url(#c-face)" />
      <path d={shapes.side} fill="#b4b4b4" stroke="none" />
      <path d={mesh(475, 1005, 635, 1285, 20)} clipPath="url(#c-side)" />
      <path d="M530 1015L550 1140L480 1265" strokeWidth="3.500" />
      <ellipse cx="572" cy="1010" rx="30" ry="14" fill="#ddd" strokeWidth="3" />

      <ellipse cx="505" cy="195" rx="97" ry="103" fill="#fff" strokeWidth="3" />
      <path d={mesh(400, 85, 610, 305, 22)} clipPath="url(#c-ring)" />
      <ellipse cx="515" cy="190" rx="70" ry="78" fill="#4c4c4c" stroke="#111" />
      <path d="M530 115v150M545 118v142M560 125v128M572 140v98" stroke="#111" strokeWidth="2.500" />
      <ellipse cx="482" cy="205" rx="72" ry="80" fill="#fff" strokeWidth="3" />
      <path d={mesh(405, 120, 560, 290, 20)} clipPath="url(#c-pin)" />

      <ellipse cx="325" cy="1075" rx="155" ry="165" transform="rotate(-15 325 1075)" fill="#1c1c1c" stroke="none" />
      <ellipse cx="332" cy="1070" rx="137" ry="152" transform="rotate(-15 332 1070)" fill="#262626" stroke="#0b0be6" strokeWidth="13" />
      <g clipPath="url(#c-hole)" stroke="#6a6a6a" strokeWidth="1">
        <ellipse cx="342" cy="1062" rx="122" ry="140" />
        <ellipse cx="348" cy="1058" rx="115" ry="136" />
        <ellipse cx="354" cy="1055" rx="110" ry="133" />
        <ellipse cx="368" cy="1050" rx="105" ry="130" fill="#eff6ff" stroke="#111" strokeWidth="2" />
      </g>
      <ellipse cx="332" cy="1070" rx="137" ry="152" transform="rotate(-15 332 1070)" stroke="#0b0be6" strokeWidth="13" />
    </g>
  </svg>
)

const Graphics = () => (
  <div className="relative flex h-[732px] shrink-0 flex-col border border-t-2 border-[#a3cff5] bg-gradient-to-b from-[#fbfcff] to-[#e6f1fe]">
    <div className="pr-[5px] pl-[7px]">
      <PanelHead title="图形" color="text-[#52a5e6]" pin="#3a8fd3" />
    </div>
    <div className="-mt-[3px] flex items-center pl-[3px]">
      <ToolRow items={gfxTools} />
    </div>
    <div className="absolute top-[62px] right-[5px] flex h-[14px] w-[16px] items-center justify-center rounded-[2px] bg-[#dfe6ee]">
      <div className="h-[9px] w-[9px] bg-gradient-to-r from-[#17368f] via-[#2f9ab8] to-[#f0c52d]" />
    </div>
    <Rod />
    <svg viewBox="0 0 60 60" width="60" height="60" className="absolute top-[646px] left-[26px] overflow-visible">
      <path d="M16 41L23 12" stroke="#e6195a" strokeWidth="2" />
      <path d="M24 6l4 10-8-2z" fill="#e6195a" />
      <path d="M16 41L42 49" stroke="#4d86c6" strokeWidth="2" />
      <path d="M48 51l-10 2 2-7z" fill="#4d86c6" />
      <circle cx="11" cy="44" r="3" fill="#4aa84a" />
      <text x="27" y="1" className="text-xs" fill="#222" textAnchor="middle" dominantBaseline="middle">x</text>
      <text x="5" y="46" className="text-xs" fill="#222" textAnchor="middle" dominantBaseline="middle">y</text>
      <text x="53" y="52" className="text-xs" fill="#222" textAnchor="middle" dominantBaseline="middle">z</text>
    </svg>
  </div>
)

const tableTools: Tok[] = ["pane", "|", "t:8.85:e-12", "@auto", "t:8.5:e-1", "t:850:e-1", "t:0.85", "|", "@gridBlue", "globeG", "|", "broomSolo", "trash", "tableCols", "solid", "ear", "tableExp", "tableTo", "tableFrom", "magGrid"]

const cols = ["w-[66px]", "w-[62px]", "w-[55px]", "w-[103px]"]
const head = ["X", "Y", "Z", "失效循环次数 (1)"]
const data = [
  ["0.0071673", "0.0000", "0.018672", "21857"],
  ["-0.0010467", "0.0082000", "0.019972", "1.0000E20"],
]

const Results = () => (
  <div className="mt-[6px] flex h-[254px] flex-col border border-[#d5d8de] text-xs text-[#111]">
    <div className="flex h-[31px] shrink-0 items-end border-b border-[#d5d8de] pl-[3px]">
      <div className="mb-[-1px] flex h-[25px] w-[35px] items-center justify-center bg-[#ececec]">进度</div>
      <div className="mb-[-1px] ml-[8px] flex h-[25px] w-[34px] items-center justify-center bg-[#ececec]">日志</div>
      <div className="mb-[-1px] ml-[8px] flex h-[26px] w-[120px] items-center border border-b-0 border-[#d5d8de] bg-[#fafbff] pl-[4px] text-[#3f62a0]">
        最大值和最小值
        <span className="ml-[7px] text-[#c4c4c4]">x</span>
      </div>
      <span className="mb-[6px] ml-auto pr-[2px]"><PinMenu c="#555" /></span>
    </div>
    <div className="mt-[6px] flex h-[22px] shrink-0 items-center pl-[7px]">
      {tableTools.map((t, i) => {
        if (t === "|") return <Sep key={i} />
        if (t === "@auto")
          return (
            <span key={i} className="flex w-[23px] justify-center">
              <span className="flex h-[22px] w-[17px] items-center justify-center rounded-[2px] border border-[#4da3e8] bg-[#9ccdf7] text-[6px] font-bold text-[#2d75b0]">AUTO</span>
            </span>
          )
        if (t[0] === "@")
          return (
            <span key={i} className="flex w-[23px] justify-center">
              <span className="flex h-[22px] w-[18px] items-center justify-center rounded-[2px] border border-[#4da3e8] bg-[#9ccdf7]">
                <Ic n={t.slice(1)} s={14} />
              </span>
            </span>
          )
        if (t[1] === ":") {
          const [, a, b] = t.split(":")
          return (
            <span key={i} className="flex w-[23px] shrink-0 flex-col items-center text-[9px] leading-[10px] text-[#3a8fd3]">
              <span>{a}</span>
              {b && <span>{b}</span>}
            </span>
          )
        }
        return (
          <span key={i} className="flex w-[23px] shrink-0 justify-center">
            <Ic n={t} />
          </span>
        )
      })}
      <span className="ml-[3px]"><Caret c="#222" /></span>
    </div>
    <div className="mx-[9px] mt-[6px] flex min-h-0 flex-1 flex-col border border-t-2 border-[#d8d8d8] bg-white">
      <div className="flex h-[27px] shrink-0 bg-[#f0f0f0]">
        {head.map((h, i) => (
          <div key={h} className={`${cols[i]} flex items-center border-r border-[#c8c8c8] pl-[6px] whitespace-nowrap`}>{h}</div>
        ))}
      </div>
      {data.map((d, r) => (
        <div key={r} className="flex h-[20px] shrink-0 border-b-2 border-[#c4c4c4]">
          {d.map((v, i) => (
            <div key={i} className={`${cols[i]} flex items-center overflow-hidden border-r border-[#c8c8c8] bg-[#f5f5f5] pl-[1px] whitespace-nowrap`}>{v}</div>
          ))}
        </div>
      ))}
    </div>
    <div className="h-[7px] shrink-0" />
  </div>
)

export default function App() {
  return (
    <div className={`flex h-[1176px] w-[2148px] flex-col overflow-hidden bg-[#fafbff] ${ns}`}>
      <TitleBar />
      <Tabs />
      <Ribbon />
      <div className="mt-[6px] flex h-[992px] pl-[7px]">
        <Tree />
        <Settings />
        <div className="ml-[6px] flex w-[1060px] flex-col">
          <Graphics />
          <Results />
        </div>
      </div>
      <div className="mt-[9px] flex h-[22px] items-center pl-[1465px] text-xs whitespace-nowrap text-[#222]">
        1.21 GB
        <span className="mx-[6px] h-[14px] w-px bg-[#333]" />
        1.39 GB
      </div>
    </div>
  )
}
